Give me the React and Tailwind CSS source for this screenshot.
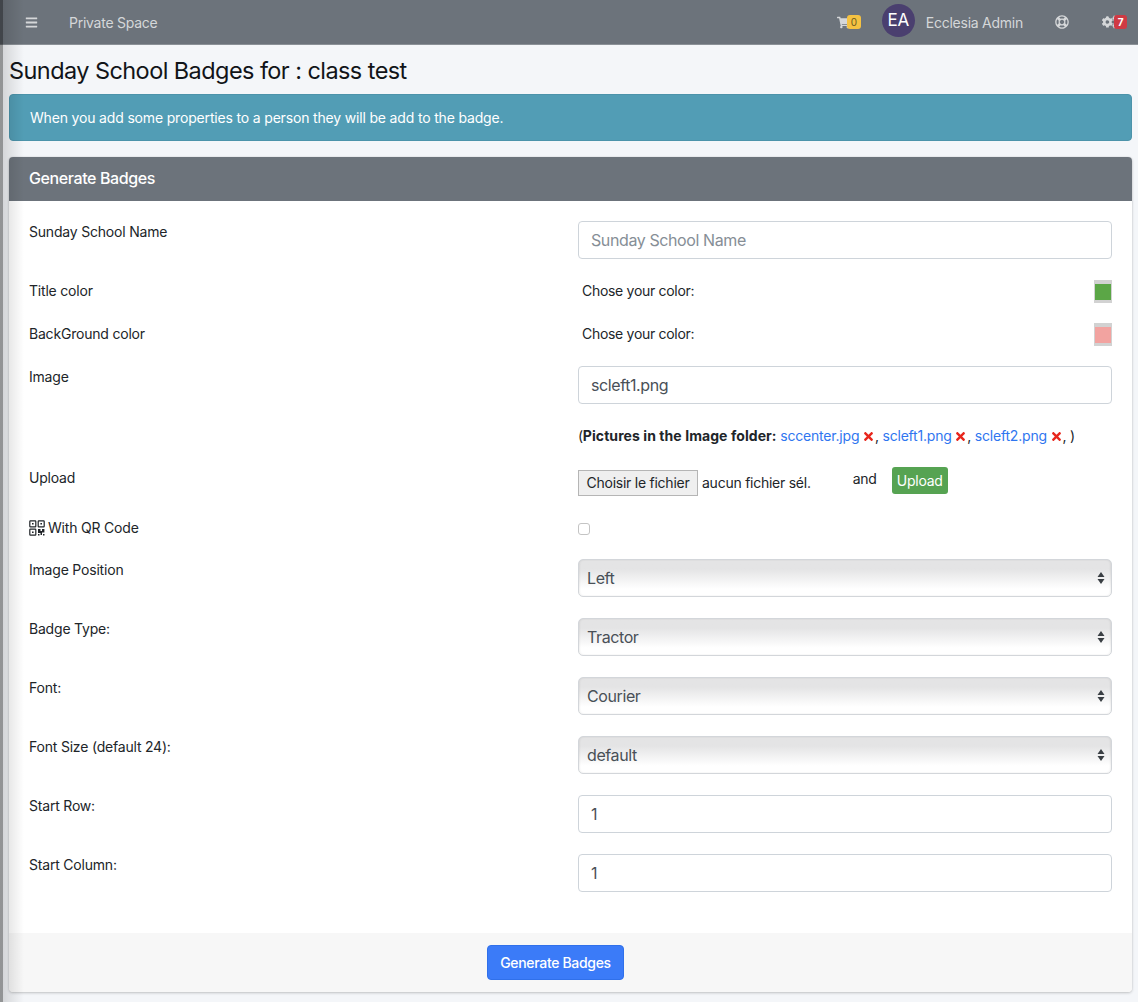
import { FaBars, FaShoppingCart, FaRegLifeRing, FaCogs, FaTimes } from 'react-icons/fa'

function Row({ label, className = '', children }) {
  return (
    <div className={`flex items-start ${className}`}>
      <div className="w-[549px] shrink-0 text-[14px] leading-[22px] tracking-[-0.2px] text-[#212529]">{label}</div>
      <div className="w-[534px]">{children}</div>
    </div>
  )
}

function TextInput({ value, placeholder }) {
  return (
    <input
      readOnly
      value={value}
      placeholder={placeholder}
      className="block w-full h-[38px] px-3 text-[16px] tracking-[-0.4px] text-[#495057] placeholder:text-[#868e96] bg-white border border-[#ced4da] rounded-[4px] outline-none"
    />
  )
}

function SelectBox({ value }) {
  return (
    <div className="relative">
      <select
        value={value}
        onChange={() => {}}
        className="block w-full h-[38px] pl-2 pr-6 text-[16px] tracking-[-0.4px] text-[#495057] appearance-none bg-gradient-to-b from-[#e4e4e5] from-25% to-white to-80% border border-[#d3d6da] rounded-[5px] shadow-[inset_1px_0_2px_rgba(0,0,0,0.06),inset_-1px_0_2px_rgba(0,0,0,0.06)] outline-none"
      >
        <option>{value}</option>
      </select>
      <svg className="absolute right-[7px] top-[12px]" width="8" height="14" viewBox="0 0 8 14">
        <path d="M4 1 L7.5 6 L0.5 6 Z M0.5 8 L7.5 8 L4 13 Z" fill="#3a3f44" />
      </svg>
    </div>
  )
}

function ColorRow({ label, color, className }) {
  return (
    <Row label={label} className={className}>
      <div className="flex items-start justify-between h-[23px] pl-1 text-[14px] leading-[22px] tracking-[-0.3px] text-[#212529]">
        <span>Chose your color:</span>
        <span className="w-[18px] h-[23px] bg-[#d2d2d2] flex items-center justify-center">
          <span className={`block w-4 h-4 ${color}`} />
        </span>
      </div>
    </Row>
  )
}

function PicLink({ name }) {
  return (
    <>
      <span className="text-[#2f76f0] tracking-[-0.2px]">{name}</span>{' '}
      <FaTimes className="inline -ml-px text-[#e8261c] text-[13px] align-[-2px]" />,{' '}
    </>
  )
}

function QrIcon() {
  return (
    <svg width="16" height="16" viewBox="0 0 16 16" fill="none" stroke="#212529" strokeWidth="1.2">
      <rect x="0.8" y="0.8" width="6" height="6" rx="0.6" />
      <rect x="9.2" y="0.8" width="6" height="6" rx="0.6" />
      <rect x="0.8" y="9.2" width="6" height="6" rx="0.6" />
      <path d="M3 3h1.6v1.6H3z M11.4 3H13v1.6h-1.6z M3 11.4h1.6V13H3z" fill="#212529" stroke="none" />
      <path d="M9 9h2.5v2H13V9h2.4v3.5H13V15h-1.5v-2H9z M9 14h1.5v1.5H9z M14 14h1.5v1.5H14z" fill="#212529" stroke="none" />
    </svg>
  )
}

export default function App() {
  return (
    <div className="relative w-[1138px] h-[1002px] overflow-hidden bg-[#f4f6f9] font-['Inter','Liberation_Sans',sans-serif]">
      <header className="flex items-center h-[45px] bg-[#6c737b] border-b border-[#8b9197] text-[14px] tracking-[-0.25px] text-[#d5d7d9]">
        <FaBars className="ml-[25px] text-[13px]" />
        <span className="ml-[31px]">Private Space</span>
        <div className="ml-auto flex items-center">
          <div className="relative w-[24px] h-[16px]">
            <FaShoppingCart className="text-[13px] mt-[2px] text-[#d5d7d9]" />
            <span className="absolute left-[10px] top-[1px] w-[14px] h-[14px] rounded-[3px] bg-[#f5c242] text-[#6b5a20] text-[10px] leading-[14px] text-center">0</span>
          </div>
          <div className="ml-[21px] w-[33px] h-[33px] mb-[4px] rounded-full bg-[#4a3f6f] text-white text-[17px] leading-[33px] text-center">EA</div>
          <span className="ml-[11px]">Ecclesia Admin</span>
          <FaRegLifeRing className="ml-[32px] text-[14px]" />
          <div className="relative ml-[33px] mr-[11px] w-[25px] h-[16px]">
            <FaCogs className="text-[16px]" />
            <span className="absolute left-[12px] top-[1px] w-[13px] h-[14px] rounded-[3px] bg-[#cf3a44] text-white text-[10px] font-bold leading-[14px] text-center">7</span>
          </div>
        </div>
      </header>

      <main className="px-[9px] w-[1141px]">
        <h1 className="pt-[11px] pb-[9px] text-[23.5px] tracking-[-0.57px] leading-[29px] font-normal text-[#111418]">
          Sunday School Badges for : class test
        </h1>

        <div className="flex items-center h-[47px] px-5 bg-[#529db5] rounded-[4px] border border-[#4c93aa] text-[14px] tracking-[-0.17px] text-white">
          When you add some properties to a person they will be add to the badge.
        </div>

        <section className="mt-4 bg-white rounded-[4px] shadow-[0_0_1px_rgba(0,0,0,0.2),0_1px_3px_rgba(0,0,0,0.2)] overflow-hidden">
          <div className="flex items-center h-[44px] pb-[2px] px-5 bg-[#6c737b] text-[16px] tracking-[-0.4px] font-medium text-white">Generate Badges</div>

          <div className="px-5 pt-5 h-[732px]">
            <Row label="Sunday School Name">
              <TextInput placeholder="Sunday School Name" />
            </Row>
            <ColorRow label="Title color" color="bg-[#5ba646]" className="mt-[21px]" />
            <ColorRow label="BackGround color" color="bg-[#f2a3a0]" className="mt-[20px]" />
            <Row label="Image" className="mt-[20px]">
              <TextInput value="scleft1.png" />
            </Row>
            <Row label="" className="mt-[21px]">
              <div className="text-[14px] leading-[22px] tracking-[-0.25px] text-[#212529] whitespace-nowrap">
                (<b className="font-bold tracking-[0.07px]">Pictures in the Image folder:</b>{' '}
                <PicLink name="sccenter.jpg" />
                <PicLink name="scleft1.png" />
                <PicLink name="scleft2.png" />)
              </div>
            </Row>
            <Row label="Upload" className="mt-[20px]">
              <div className="flex items-start h-[29px] text-[14px] tracking-[-0.25px] text-[#212529]">
                <button className="mt-[3px] w-[120px] h-[26px] bg-[#efefef] border border-[#b5b5b5] leading-[22px]">Choisir le fichier</button>
                <span className="ml-1 mt-[5px]">aucun fichier sél.</span>
                <span className="ml-[42px] mt-[1px]">and</span>
                <button className="ml-[15px] w-[56px] h-[27px] bg-[#56a352] rounded-[3px] text-white">Upload</button>
              </div>
            </Row>
            <Row
              label={
                <span className="flex items-center gap-[3px]">
                  <QrIcon /> With QR Code
                </span>
              }
              className="mt-[21px]"
            >
              <span className="block mt-[6px] w-3 h-3 bg-white border border-[#c4c4c4] rounded-[3px]" />
            </Row>
            <Row label="Image Position" className="mt-[20px]">
              <SelectBox value="Left" />
            </Row>
            <Row label="Badge Type:" className="mt-[21px]">
              <SelectBox value="Tractor" />
            </Row>
            <Row label="Font:" className="mt-[21px]">
              <SelectBox value="Courier" />
            </Row>
            <Row label="Font Size (default 24):" className="mt-[21px]">
              <SelectBox value="default" />
            </Row>
            <Row label="Start Row:" className="mt-[21px]">
              <TextInput value="1" />
            </Row>
            <Row label="Start Column:" className="mt-[21px]">
              <TextInput value="1" />
            </Row>
          </div>

          <div className="flex justify-center items-start h-[59px] pt-3 pr-[30px] bg-[#f7f7f7]">
            <button className="w-[137px] h-[35px] bg-[#3b7bf8] rounded-[4px] border border-[#3070ea] text-white text-[14px] tracking-[-0.33px] font-medium">Generate Badges</button>
          </div>
        </section>
      </main>

      <div className="absolute left-0 top-0 bottom-0 w-[24px] pointer-events-none bg-[linear-gradient(to_right,rgba(0,0,0,0.4)_0,rgba(0,0,0,0.4)_3px,rgba(0,0,0,0.13)_3px,transparent_24px)]" />
    </div>
  )
}
